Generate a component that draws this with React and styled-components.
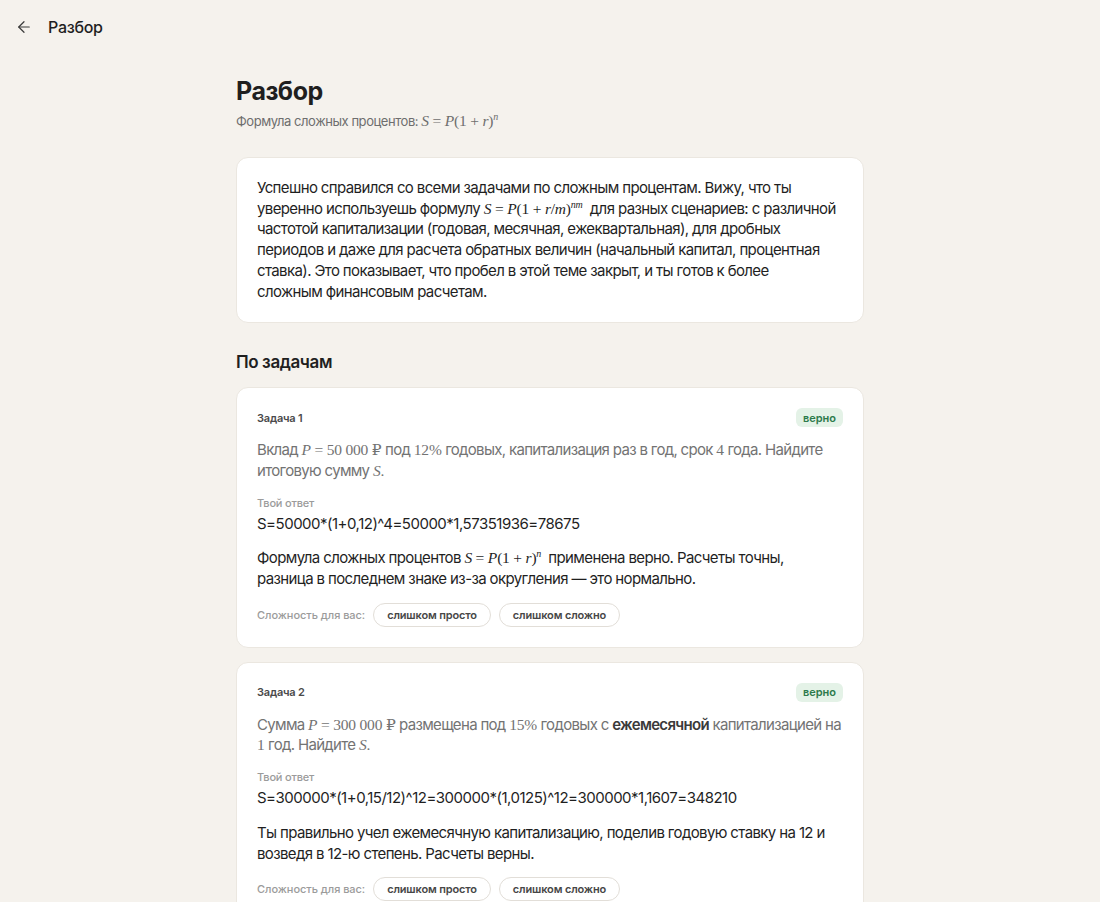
import React from "react";
import styled, { createGlobalStyle } from "styled-components";
import { ArrowLeft } from "lucide-react";

const Global = createGlobalStyle`
  html, body { margin: 0; padding: 0; background: #f5f2ed; }
  body {
    font-family: Inter, "Noto Sans", sans-serif;
    color: #1f1f1f;
    -webkit-font-smoothing: antialiased;
  }
  * { box-sizing: border-box; }
`;

const Page = styled.div`
  min-height: 902px;
  background: #f5f2ed;
`;

const TopBar = styled.header`
  display: flex;
  align-items: center;
  gap: 14px;
  height: 54px;
  padding: 0 14px;
`;

const BackButton = styled.button`
  display: flex;
  align-items: center;
  justify-content: center;
  width: 20px;
  height: 20px;
  padding: 0;
  border: none;
  background: none;
  color: #3a3a3a;
  cursor: pointer;
`;

const TopTitle = styled.span`
  font-size: 16px;
  font-weight: 500;
  letter-spacing: -0.3px;
`;

const Main = styled.main`
  width: 628px;
  margin: 0 auto;
  padding-top: 20px;
  display: flex;
  flex-direction: column;
`;

const Title = styled.h1`
  margin: 0;
  font-size: 25px;
  line-height: 34px;
  font-weight: 700;
  letter-spacing: -0.5px;
`;

const Subtitle = styled.p`
  margin: 4px 0 0;
  font-size: 13px;
  line-height: 18px;
  color: #6e6e6e;
  letter-spacing: -0.45px;
`;

const Card = styled.section`
  background: #fff;
  border: 1px solid #ebe7e0;
  border-radius: 12px;
  padding: 20px 20px;
  display: flex;
  flex-direction: column;
`;

const Summary = styled(Card)`
  margin-top: 27px;
`;

const Body = styled.p`
  margin: 0;
  font-size: 15px;
  line-height: 20.7px;
  letter-spacing: ${(p) => (p.$muted ? "-0.68px" : "-0.62px")};
  color: ${(p) => (p.$muted ? "#737373" : "#1f1f1f")};
  margin-top: ${(p) => p.$gap || 0}px;

  b { font-weight: 600; color: #3a3a3a; }
`;

const M = styled.span`
  font-family: "Liberation Serif", "DejaVu Serif", serif;
  font-size: 15.5px;
  letter-spacing: -0.2px;
  white-space: nowrap;
  i { font-style: italic; }
`;

const Sup = styled.span`
  display: inline-block;
  font-size: 10px;
  font-style: italic;
  line-height: 10px;
  transform: translateY(-6px);
`;

const SectionTitle = styled.h2`
  margin: 28px 0 14px;
  font-size: 17px;
  line-height: 22px;
  font-weight: 600;
  letter-spacing: -0.4px;
`;

const TaskList = styled.div`
  display: flex;
  flex-direction: column;
  gap: 14px;
`;

const TaskHead = styled.div`
  display: flex;
  align-items: center;
  justify-content: space-between;
  height: 19px;
  margin-bottom: 13px;
`;

const TaskLabel = styled.span`
  font-size: 11px;
  font-weight: 600;
  color: #4a4a4a;
  letter-spacing: -0.2px;
`;

const Badge = styled.span`
  display: inline-flex;
  align-items: center;
  height: 19px;
  padding: 0 7px;
  border-radius: 6px;
  background: #e4f2e7;
  color: #2d7a4c;
  font-size: 11px;
  font-weight: 600;
`;

const AnswerLabel = styled.div`
  margin-top: 14px;
  font-size: 11px;
  line-height: 15px;
  font-weight: 500;
  color: #9b9b9b;
  letter-spacing: -0.2px;
`;

const Answer = styled.div`
  margin-top: 3px;
  font-size: 15px;
  line-height: 20.7px;
  letter-spacing: -0.5px;
`;

const RateRow = styled.div`
  display: flex;
  align-items: center;
  gap: 8px;
  margin-top: 13px;
`;

const RateLabel = styled.span`
  font-size: 11px;
  font-weight: 500;
  color: #9b9b9b;
  letter-spacing: -0.05px;
`;

const Pill = styled.button`
  height: 24px;
  padding: 0 13px;
  border: 1px solid #e2ded8;
  border-radius: 12px;
  background: #fff;
  font-family: inherit;
  font-size: 11px;
  font-weight: 600;
  letter-spacing: -0.15px;
  color: #474747;
  cursor: pointer;
`;

const tasks = [
  {
    n: 1,
    problem: (
      <>
        Вклад <M><i>P</i> = 50 000 ₽</M> под <M>12%</M> годовых, капитализация раз в год, срок <M>4</M> года. Найдите итоговую сумму <M><i>S</i>.</M>
      </>
    ),
    answer: "S=50000*(1+0,12)^4=50000*1,57351936=78675",
    comment: (
      <>
        Формула сложных процентов <M><i>S</i> = <i>P</i>(1 + <i>r</i>)<Sup>n</Sup></M>&nbsp; применена верно. Расчеты точны, разница&nbsp;в&nbsp;последнем знаке из-за округления — это нормально.
      </>
    ),
  },
  {
    n: 2,
    problem: (
      <>
        Сумма <M><i>P</i> = 300 000 ₽</M> размещена под <M>15%</M> годовых с <b>ежемесячной</b> капитализацией на <M>1</M> год. Найдите <M><i>S</i>.</M>
      </>
    ),
    answer: "S=300000*(1+0,15/12)^12=300000*(1,0125)^12=300000*1,1607=348210",
    comment: (
      <>Ты правильно учел ежемесячную капитализацию, поделив годовую ставку на 12 и возведя в 12-ю степень. Расчеты верны.</>
    ),
  },
];

export default function App() {
  return (
    <Page>
      <Global />
      <TopBar>
        <BackButton aria-label="Назад">
          <ArrowLeft size={18} strokeWidth={1.6} />
        </BackButton>
        <TopTitle>Разбор</TopTitle>
      </TopBar>
      <Main>
        <Title>Разбор</Title>
        <Subtitle>
          Формула сложных процентов: <M><i>S</i> = <i>P</i>(1 + <i>r</i>)<Sup>n</Sup></M>
        </Subtitle>

        <Summary>
          <Body>
            Успешно справился со всеми задачами по сложным процентам. Вижу, что ты уверенно используешь формулу{" "}
            <M><i>S</i> = <i>P</i>(1 + <i>r</i>/<i>m</i>)<Sup>nm</Sup></M>&nbsp; для разных сценариев: с различной частотой капитализации (годовая, месячная, ежеквартальная), для дробных периодов и даже для расчета обратных величин (начальный капитал, процентная ставка). Это показывает, что пробел в этой теме закрыт, и ты готов к более сложным&nbsp;финансовым расчетам.
          </Body>
        </Summary>

        <SectionTitle>По задачам</SectionTitle>

        <TaskList>
          {tasks.map((t) => (
            <Card key={t.n}>
              <TaskHead>
                <TaskLabel>Задача {t.n}</TaskLabel>
                <Badge>верно</Badge>
              </TaskHead>
              <Body $muted>{t.problem}</Body>
              <AnswerLabel>Твой ответ</AnswerLabel>
              <Answer>{t.answer}</Answer>
              <Body $gap={14}>{t.comment}</Body>
              <RateRow>
                <RateLabel>Сложность для вас:</RateLabel>
                <Pill>слишком просто</Pill>
                <Pill>слишком сложно</Pill>
              </RateRow>
            </Card>
          ))}
        </TaskList>
      </Main>
    </Page>
  );
}
